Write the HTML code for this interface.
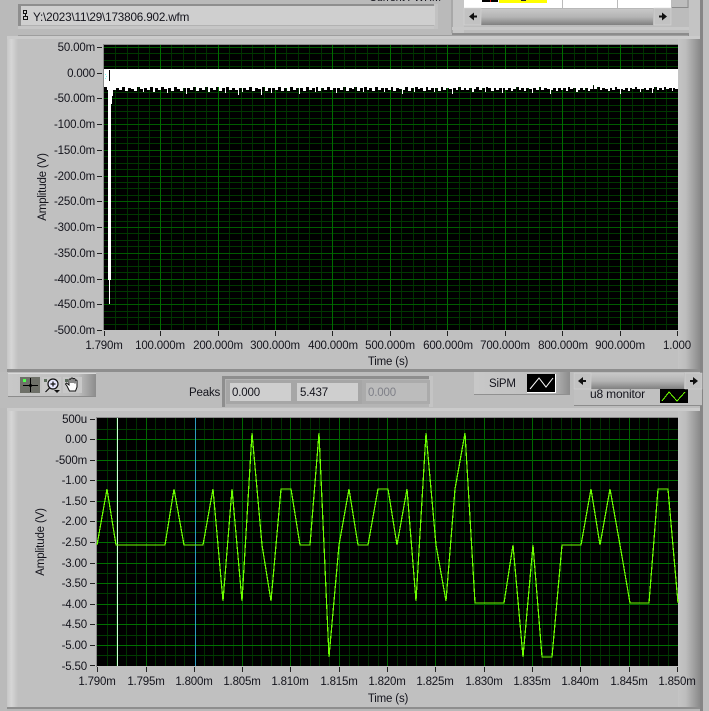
<!DOCTYPE html>
<html><head><meta charset="utf-8"><style>
html,body{margin:0;padding:0;width:709px;height:711px;overflow:hidden;background:#b9b9b9}
svg{display:block}
text{font-family:"Liberation Sans",sans-serif;font-size:11.5px;letter-spacing:-.17px;fill:#14141c}
.e text{text-anchor:end}
.m text{text-anchor:middle}
</style></head><body>
<svg width="709" height="711" viewBox="0 0 709 711" xmlns="http://www.w3.org/2000/svg">
<defs>
<linearGradient id="rg" x1="0" x2="1" y1="0" y2="0"><stop offset="0" stop-color="#c4c4c4"/><stop offset=".35" stop-color="#bdbdbd"/><stop offset="1" stop-color="#8a8a8a"/></linearGradient>
<linearGradient id="lg" x1="0" x2="1" y1="0" y2="0"><stop offset="0" stop-color="#c6c6c6"/><stop offset=".4" stop-color="#d6d6d6"/><stop offset="1" stop-color="#c0c0c0"/></linearGradient>
<linearGradient id="sb" x1="0" x2="0" y1="0" y2="1"><stop offset="0" stop-color="#c8c8c8"/><stop offset=".5" stop-color="#b4b4b4"/><stop offset="1" stop-color="#808080"/></linearGradient>
<linearGradient id="pal" x1="0" x2="1" y1="0" y2="0"><stop offset="0" stop-color="#c8c8c8"/><stop offset=".8" stop-color="#bebebe"/><stop offset="1" stop-color="#8c8c8c"/></linearGradient>
</defs>

<!-- base -->
<rect width="709" height="711" fill="#bababa"/>

<!-- file path -->
<rect x="18" y="4" width="420" height="25" fill="#b2b2b2"/>
<rect x="18" y="4" width="419" height="2" fill="#8e8e8e"/>
<rect x="18" y="4" width="3" height="22" fill="#8e8e8e"/>
<rect x="18" y="26" width="420" height="3" fill="#c6c6c6"/>
<rect x="434" y="4" width="4" height="25" fill="#c2c2c2"/>
<rect x="21" y="6" width="414" height="19" fill="#cfcfcf"/>
<path d="M23.500 10.500h3v3h-3zM25.500 13.500v3M23.500 16.500h4v3h-4z" fill="none" stroke="#111" stroke-width="1" shape-rendering="crispEdges"/>
<text x="33" y="21" style="font-size:11.7px">Y:\2023\11\29\173806.902.wfm</text>
<text x="369" y="1" style="font-size:11px">Current FWHM</text>

<!-- top right table frame -->
<rect x="452" y="0" width="248" height="33" fill="#bcbcbc"/>
<rect x="452" y="0" width="12" height="33" fill="#c6c6c6"/>
<rect x="451" y="0" width="2" height="33" fill="#a8a8a8"/>
<rect x="452" y="27" width="248" height="3" fill="#c8c8c8"/>
<rect x="452" y="33" width="248" height="3" fill="#8c8c8c"/>
<rect x="689" y="0" width="11" height="36" fill="#c4c4c4"/>
<rect x="464" y="0" width="207" height="8" fill="#fff"/>
<rect x="482" y="0" width="16" height="2" fill="#000"/>
<rect x="490" y="0" width="1" height="2" fill="#e01010"/>
<rect x="499" y="0" width="48" height="3" fill="#ffff00"/>
<rect x="521" y="0" width="5" height="1" fill="#222"/>
<rect x="562" y="0" width="1" height="8" fill="#bbb"/>
<rect x="617" y="0" width="1" height="8" fill="#bbb"/>
<rect x="672" y="0" width="16" height="7" fill="#bdbdbd"/>
<path d="M672 7.500h16.500M688 0v8" stroke="#8a8a8a" fill="none"/>
<rect x="464" y="8" width="207" height="17" fill="#b8b8b8"/>
<rect x="481" y="9" width="172" height="16" fill="url(#sb)"/>
<rect x="464" y="8" width="17" height="17" fill="#c2c2c2" stroke="#d8d8d8" stroke-width=".5"/>
<rect x="654" y="8" width="17" height="17" fill="#c2c2c2" stroke="#d8d8d8" stroke-width=".5"/>
<path d="M469 16.500l5-4v3h3v2h-3v3zM667 16.500l-5-4v3h-3v2h3v3z" fill="#111"/>

<!-- top panel -->
<rect x="7" y="36" width="693" height="334" fill="#c0c0c0"/>
<rect x="7" y="36" width="693" height="3" fill="#cbcbcb"/>
<rect x="7" y="39" width="11" height="331" fill="url(#lg)"/>
<rect x="678" y="39" width="22" height="331" fill="url(#rg)"/>
<rect x="700" y="0" width="3" height="408" fill="#858585"/>
<rect x="703" y="0" width="6" height="711" fill="#bebebe"/>
<rect x="7" y="369" width="693" height="3" fill="#8e8e8e"/>
<rect x="18" y="35" width="670" height="1" fill="#9e9e9e"/>

<!-- top plot -->
<rect x="103" y="44" width="575" height="1" fill="#8a8a8a"/>
<rect x="103" y="44" width="1" height="286" fill="#8a8a8a"/>
<rect x="104" y="45" width="574" height="285" fill="#000"/>
<g shape-rendering="crispEdges" fill="none" stroke-width="1">
<path stroke="#003000" d="M115.500 45V330M127.500 45V330M138.500 45V330M149.500 45V330M171.500 45V330M183.500 45V330M195.500 45V330M206.500 45V330M229.500 45V330M241.500 45V330M252.500 45V330M264.500 45V330M286.500 45V330M298.500 45V330M309.500 45V330M321.500 45V330M344.500 45V330M355.500 45V330M367.500 45V330M378.500 45V330M401.500 45V330M413.500 45V330M424.500 45V330M436.500 45V330M459.500 45V330M470.500 45V330M482.500 45V330M493.500 45V330M516.500 45V330M528.500 45V330M539.500 45V330M551.500 45V330M574.500 45V330M585.500 45V330M597.500 45V330M608.500 45V330M632.500 45V330M643.500 45V330M655.500 45V330M666.500 45V330"/>
<path stroke="#003800" d="M104 53.500H678M104 60.500H678M104 66.500H678M104 79.500H678M104 85.500H678M104 92.500H678M104 105.500H678M104 111.500H678M104 118.500H678M104 130.500H678M104 137.500H678M104 143.500H678M104 156.500H678M104 163.500H678M104 169.500H678M104 182.500H678M104 188.500H678M104 195.500H678M104 208.500H678M104 214.500H678M104 221.500H678M104 233.500H678M104 240.500H678M104 246.500H678M104 259.500H678M104 266.500H678M104 272.500H678M104 285.500H678M104 291.500H678M104 298.500H678M104 311.500H678M104 317.500H678M104 324.500H678"/>
<path stroke="#005c00" d="M104 47.500H678M104 73.500H678M104 98.500H678M104 124.500H678M104 150.500H678M104 176.500H678M104 201.500H678M104 227.500H678M104 253.500H678M104 279.500H678M104 304.500H678"/>
<path stroke="#006c00" d="M160.500 45V330M218.500 45V330M275.500 45V330M332.500 45V330M390.500 45V330M447.500 45V330M505.500 45V330M562.500 45V330M620.500 45V330"/>
</g>
<!-- top waveform -->
<g shape-rendering="crispEdges" fill="#fff">
<path d="M104 69H678V89H675V88H673V91H672V88H669V89H666V87H664V90H662V88H659V90H657V87H654V89H653V93H652V88H649V90H646V88H644V89H641V92H640V89H637V87H635V89H632V88H630V91H628V88H625V90H623V89H621V94H620V89H617V87H615V90H612V88H610V91H608V89H605V88H602V90H600V87H597V89H594V85H593V89H590V91H588V88H585V90H583V88H580V90H578V92H576V88H573V89H570V87H568V91H566V88H563V90H561V88H558V91H556V88H553V90H551V94H550V89H547V88H544V90H541V87H539V90H536V88H533V93H532V89H529V88H526V91H524V88H521V90H519V87H516V89H513V91H511V88H508V90H505V88H503V93H502V88H499V90H496V88H494V91H491V88H488V87H486V92H485V88H482V90H479V87H476V89H474V92H472V88H469V90H466V88H464V90H461V87H458V90H456V88H453V94H452V89H449V88H446V90H443V87H441V91H438V88H435V92H434V88H431V90H428V87H426V91H423V88H420V89H418V87H415V92H414V88H411V91H408V87H405V90H403V94H402V89H399V88H396V91H393V87H391V90H388V88H385V92H384V88H381V90H378V87H375V91H372V88H369V90H367V87H364V92H363V88H360V91H357V87H354V89H352V88H349V91H346V87H343V90H340V88H337V93H336V88H333V90H330V87H327V90H324V88H321V91H318V87H316V92H315V88H312V90H309V87H306V91H303V88H300V94H299V88H296V90H293V87H290V91H287V88H284V91H281V87H278V90H275V88H272V93H271V88H268V91H265V87H262V95H261V89H258V88H255V91H252V87H249V90H246V88H243V92H242V88H239V95H238V90H235V88H232V90H229V87H226V93H225V88H222V91H219V87H216V90H213V88H210V92H208V87H205V90H202V88H199V91H196V87H193V90H190V88H187V94H186V88H183V91H180V89H177V87H174V91H171V88H168V93H167V89H164V87H161V90H158V88H155V92H153V87H150V90H147V88H144V92H143V89H140V87H137V91H134V89H131V88H128V91H125V87H122V90H119V88H116V90H113V96H112V104H111V280H110V304H109V280H108V90H107V87H104Z"/>
</g>
<rect x="109" y="70" width="1" height="11" fill="#000"/>
<rect x="105" y="74" width="1" height="1" fill="#7fe"/><rect x="106" y="76" width="1" height="1" fill="#7fe"/><rect x="105" y="78" width="1" height="1" fill="#7fe"/>

<!-- top axes -->
<g fill="#222" shape-rendering="crispEdges">
<path stroke="#222" fill="none" d="M97 47.500h5M97 73.500h5M97 98.500h5M97 124.500h5M97 150.500h5M97 176.500h5M97 201.500h5M97 227.500h5M97 253.500h5M97 279.500h5M97 304.500h5M97 330.500h5"/>
<path stroke="#222" fill="none" d="M104.500 331v5M160.500 331v5M218.500 331v5M275.500 331v5M332.500 331v5M390.500 331v5M447.500 331v5M505.500 331v5M562.500 331v5M620.500 331v5M677.500 331v5"/>
</g>
<g class="e">
<text x="95" y="51">50.00m</text><text x="95" y="77">0.000</text><text x="95" y="102">-50.00m</text><text x="95" y="128">-100.0m</text><text x="95" y="154">-150.0m</text><text x="95" y="180">-200.0m</text><text x="95" y="205">-250.0m</text><text x="95" y="231">-300.0m</text><text x="95" y="257">-350.0m</text><text x="95" y="283">-400.0m</text><text x="95" y="308">-450.0m</text><text x="95" y="334">-500.0m</text>
</g>
<g class="m">
<text x="104" y="349">1.790m</text><text x="160" y="349">100.000m</text><text x="218" y="349">200.000m</text><text x="275" y="349">300.000m</text><text x="333" y="349">400.000m</text><text x="390" y="349">500.000m</text><text x="448" y="349">600.000m</text><text x="505" y="349">700.000m</text><text x="563" y="349">800.000m</text><text x="620" y="349">900.000m</text><text x="677" y="349">1.000</text>
<text x="388" y="365">Time (s)</text>
<text transform="translate(46 187) rotate(-90)">Amplitude (V)</text>
</g>

<!-- middle strip: palette -->
<rect x="0" y="372" width="700" height="36" fill="#bcbcbc"/>
<rect x="8" y="373" width="88" height="24" fill="url(#pal)"/>
<rect x="8" y="373" width="88" height="1" fill="#dadada"/>
<rect x="8" y="396" width="88" height="1" fill="#8c8c8c"/>
<rect x="20" y="377" width="20" height="16" fill="#6e7068"/>
<path d="M23 385.500h15M30.500 378v14" stroke="#000" shape-rendering="crispEdges"/>
<circle cx="30.500" cy="385.500" r="1.500" fill="#000"/>
<rect x="23" y="379" width="3" height="3" fill="#4dff4d"/>
<rect x="42" y="377" width="19" height="16" fill="#c8c8c8"/>
<rect x="44" y="379" width="3" height="3" fill="#5a6a5a"/>
<circle cx="53" cy="384" r="5" fill="#e8e8ff" stroke="#101010" stroke-width="1.200"/>
<path d="M50.500 384h5M53 381.500v5M49.500 388l-4 4" stroke="#101010" fill="none" stroke-width="1.200"/>
<path d="M54 390h6l-3 3z" fill="#101010"/>
<rect x="63" y="377" width="19" height="16" fill="#c8c8c8"/>
<rect x="65" y="379" width="3" height="3" fill="#5a6a5a"/>
<path d="M67 386l-1.500-2 1-1 2.500 2v-5a1 1 0 0 1 2 0v3-4a1 1 0 0 1 2 0v4-3.500a1 1 0 0 1 2 0v4-2.500a1 1 0 0 1 2 0v6l-1.500 4h-6z" fill="#fff" stroke="#101010" stroke-width="1"/>

<!-- Peaks -->
<text x="189" y="396">Peaks</text>
<rect x="222" y="376" width="211" height="31" fill="#b4b4b4"/>
<rect x="222" y="376" width="211" height="3" fill="#8e8e8e"/>
<rect x="222" y="376" width="3" height="31" fill="#8e8e8e"/>
<rect x="429" y="376" width="4" height="31" fill="#c4c4c4"/>
<rect x="226" y="380" width="69" height="24" fill="#a6a6a6"/>
<rect x="293" y="380" width="69" height="24" fill="#a6a6a6"/>
<rect x="362" y="380" width="68" height="24" fill="#ababab"/>
<rect x="230" y="383" width="61" height="18" fill="#cfcfcf"/>
<rect x="297" y="383" width="61" height="18" fill="#cfcfcf"/>
<rect x="366" y="383" width="61" height="18" fill="#bcbcbc"/>
<text x="232" y="396">0.000</text>
<text x="300" y="396">5.437</text>
<text x="368" y="396" style="fill:#7f8088">0.000</text>

<!-- u8 monitor legend -->
<rect x="574" y="389" width="128" height="17" fill="#c0c0c0"/>
<rect x="574" y="405" width="128" height="1" fill="#8c8c8c"/>
<text x="590" y="398" style="font-size:12px">u8 monitor</text>
<rect x="660" y="389" width="28" height="14" fill="#000"/>
<path d="M662 401l7-9 8 9 8-9" stroke="#6eff00" fill="none" shape-rendering="crispEdges"/>
<!-- SiPM legend -->
<rect x="474" y="372" width="96" height="23" fill="url(#pal)"/>
<rect x="474" y="394" width="96" height="1" fill="#909090"/>
<text x="489" y="387">SiPM</text>
<rect x="527" y="374" width="29" height="19" fill="#fff"/>
<rect x="527" y="374" width="28" height="18" fill="#000"/>
<path d="M530 389l9-11 7 9 7-9" stroke="#fff" fill="none"/>
<!-- scrollbar -->
<rect x="573" y="373" width="129" height="16" fill="#b8b8b8"/>
<rect x="591" y="373" width="93" height="16" fill="url(#sb)"/>
<rect x="574" y="373" width="17" height="16" fill="#c2c2c2" stroke="#d6d6d6" stroke-width=".5"/>
<rect x="685" y="373" width="17" height="16" fill="#c2c2c2" stroke="#d6d6d6" stroke-width=".5"/>
<path d="M578 381l5-4v3h3v2h-3v3zM698 381l-5-4v3h-3v2h3v3z" fill="#111"/>

<!-- lower panel -->
<rect x="7" y="408" width="693" height="299" fill="#c0c0c0"/>
<rect x="7" y="408" width="693" height="3" fill="#cbcbcb"/>
<rect x="7" y="411" width="11" height="296" fill="url(#lg)"/>
<rect x="678" y="411" width="22" height="296" fill="url(#rg)"/>
<rect x="700" y="406" width="3" height="305" fill="#858585"/>
<rect x="7" y="707" width="693" height="2" fill="#8e8e8e"/>
<rect x="7" y="709" width="693" height="2" fill="#b8b8b8"/>

<!-- lower plot -->
<rect x="96" y="417" width="582" height="1" fill="#8a8a8a"/>
<rect x="96" y="417" width="1" height="250" fill="#8a8a8a"/>
<rect x="97" y="418" width="581" height="248" fill="#000"/>
<g shape-rendering="crispEdges" fill="none" stroke-width="1">
<path stroke="#003000" d="M107.500 418V666M116.500 418V666M126.500 418V666M136.500 418V666M155.500 418V666M165.500 418V666M175.500 418V666M184.500 418V666M204.500 418V666M213.500 418V666M223.500 418V666M233.500 418V666M252.500 418V666M261.500 418V666M271.500 418V666M281.500 418V666M300.500 418V666M310.500 418V666M319.500 418V666M329.500 418V666M349.500 418V666M358.500 418V666M368.500 418V666M378.500 418V666M397.500 418V666M406.500 418V666M416.500 418V666M426.500 418V666M445.500 418V666M455.500 418V666M464.500 418V666M474.500 418V666M494.500 418V666M503.500 418V666M513.500 418V666M523.500 418V666M542.500 418V666M551.500 418V666M561.500 418V666M571.500 418V666M590.500 418V666M600.500 418V666M609.500 418V666M619.500 418V666M639.500 418V666M648.500 418V666M658.500 418V666M668.500 418V666"/>
<path stroke="#003c00" d="M97 429.500H678M97 450.500H678M97 470.500H678M97 490.500H678M97 511.500H678M97 532.500H678M97 552.500H678M97 573.500H678M97 593.500H678M97 614.500H678M97 635.500H678M97 655.500H678"/>
<path stroke="#007000" d="M97 439.500H678M97 460.500H678M97 480.500H678M97 501.500H678M97 521.500H678M97 542.500H678M97 563.500H678M97 583.500H678M97 604.500H678M97 624.500H678M97 645.500H678"/>
<path stroke="#006800" d="M146.500 418V666M242.500 418V666M290.500 418V666M339.500 418V666M387.500 418V666M435.500 418V666M484.500 418V666M532.500 418V666M580.500 418V666M629.500 418V666"/>
<path stroke="#2c9cc0" d="M195.500 418V666"/>
<path stroke="#d0ffd8" d="M117.500 418V666"/>
</g>
<polyline shape-rendering="crispEdges" fill="none" stroke="#6eff00" stroke-width="1.200" points="97,545 107,489 116,545 126,545 136,545 146,545 155,545 165,545 174,489 184,545 194,545 203,545 213,489 223,601 232,489 242,601 252,433 262,545 271,601 281,489 291,489 300,545 310,545 319,433 329,657 339,545 349,489 358,545 368,545 378,489 388,489 397,545 407,489 416,601 426,433 436,545 446,601 455,489 465,433 475,603 484,603 494,603 504,603 513,545 523,657 533,545 542,657 552,657 562,545 571,545 581,545 591,489 600,545 610,489 620,545 630,603 639,603 649,603 658,489 668,489 678,603"/>

<!-- lower axes -->
<path shape-rendering="crispEdges" stroke="#222" fill="none" d="M90 419.500h5M90 439.500h5M90 460.500h5M90 480.500h5M90 501.500h5M90 521.500h5M90 542.500h5M90 563.500h5M90 583.500h5M90 604.500h5M90 624.500h5M90 645.500h5M90 665.500h5M97.500 667v5M146.500 667v5M194.500 667v5M242.500 667v5M290.500 667v5M339.500 667v5M387.500 667v5M435.500 667v5M484.500 667v5M532.500 667v5M580.500 667v5M629.500 667v5M677.500 667v5"/>
<g class="e">
<text x="87" y="423">500u</text><text x="87" y="443">0.00</text><text x="87" y="464">-500m</text><text x="87" y="484">-1.00</text><text x="87" y="505">-1.50</text><text x="87" y="525">-2.00</text><text x="87" y="546">-2.50</text><text x="87" y="567">-3.00</text><text x="87" y="587">-3.50</text><text x="87" y="608">-4.00</text><text x="87" y="628">-4.50</text><text x="87" y="649">-5.00</text><text x="87" y="670">-5.50</text>
</g>
<g class="m">
<text x="97" y="685">1.790m</text><text x="146" y="685">1.795m</text><text x="194" y="685">1.800m</text><text x="242" y="685">1.805m</text><text x="290" y="685">1.810m</text><text x="339" y="685">1.815m</text><text x="387" y="685">1.820m</text><text x="435" y="685">1.825m</text><text x="484" y="685">1.830m</text><text x="532" y="685">1.835m</text><text x="580" y="685">1.840m</text><text x="629" y="685">1.845m</text><text x="677" y="685">1.850m</text>
<text x="388" y="702">Time (s)</text>
<text transform="translate(44 542) rotate(-90)">Amplitude (V)</text>
</g>
</svg>
</body></html>
